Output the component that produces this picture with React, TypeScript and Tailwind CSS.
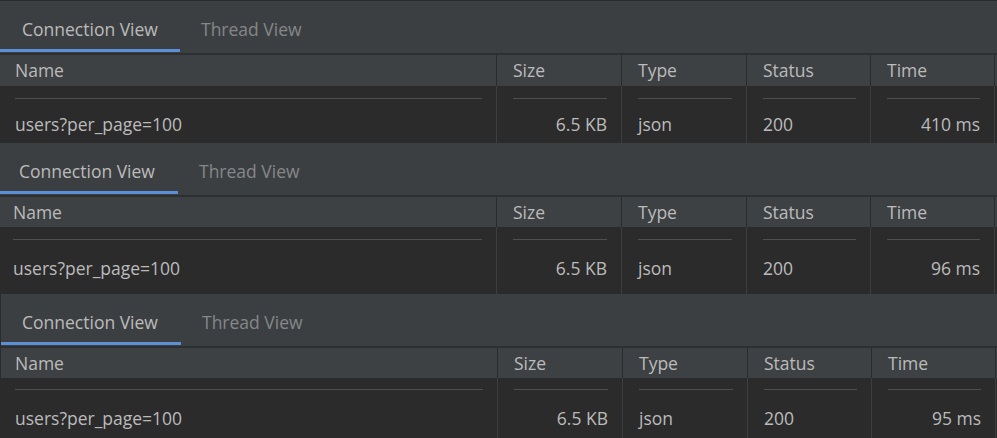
import { ReactNode } from 'react';

type PanelConfig = {
  time: string;
  outer: string;
  tabFirst: string;
  nameHeader: string;
  nameCell: string;
  headerH: string;
  dataH: string;
  lineTop: string;
  textGap: string;
};

const panels: PanelConfig[] = [
  {
    time: '410 ms',
    outer: 'border-t border-[#2b2b2b]',
    tabFirst: 'w-[180px] pl-[22px]',
    nameHeader: 'pl-[15px]',
    nameCell: 'pl-[15px]',
    headerH: 'h-[31px]',
    dataH: 'h-[57px]',
    lineTop: 'pt-[12px]',
    textGap: 'mt-[13px]',
  },
  {
    time: '96 ms',
    outer: '',
    tabFirst: 'w-[178px] pl-[19px]',
    nameHeader: 'pl-[13px]',
    nameCell: 'pl-[13px]',
    headerH: 'h-[30px]',
    dataH: 'h-[67px]',
    lineTop: 'pt-[12px]',
    textGap: 'mt-[16px]',
  },
  {
    time: '95 ms',
    outer: 'border-l border-[#2b2b2b]',
    tabFirst: 'w-[180px] pl-[21px]',
    nameHeader: 'pl-[14px]',
    nameCell: 'pl-[14px]',
    headerH: 'h-[30px]',
    dataH: 'h-[60px]',
    lineTop: 'pt-[11px]',
    textGap: 'mt-[16px]',
  },
];

const HeadCell = ({ className, children }: { className: string; children?: ReactNode }) => (
  <div className={`flex items-center border-l border-[#2b2b2b] pl-[16px] ${className}`}>{children}</div>
);

const DataCell = ({
  className,
  lineTop,
  textGap,
  right,
  children,
}: {
  className: string;
  lineTop: string;
  textGap: string;
  right?: boolean;
  children?: ReactNode;
}) => (
  <div className={`flex flex-col border-l border-[#3c3f41] pr-[14px] ${lineTop} ${className}`}>
    <div className="h-px bg-[#4f5052]" />
    <div className={`leading-[24px] ${textGap} ${right ? 'text-right' : ''}`}>{children}</div>
  </div>
);

const Panel = ({ p }: { p: PanelConfig }) => (
  <section className={`flex flex-col overflow-hidden ${p.outer}`}>
    <div className="flex h-[52px] items-start bg-[#3c3f41]">
      <div className={`h-[51px] border-b-[3px] border-[#5b8fd8] pt-[16px] leading-[24px] text-[#bbbbbb] ${p.tabFirst}`}>
        Connection View
      </div>
      <div className="h-[51px] pl-[21px] pt-[16px] leading-[24px] text-[#858789]">Thread View</div>
    </div>
    <div className="h-[2px] bg-[#2d2f31]" />
    <div className={`flex bg-[#3e4143] text-[#bbbbbb] ${p.headerH}`}>
      <div className={`flex w-[496px] shrink-0 items-center ${p.nameHeader}`}>Name</div>
      <HeadCell className="w-[125px] shrink-0">Size</HeadCell>
      <HeadCell className="w-[125px] shrink-0">Type</HeadCell>
      <HeadCell className="w-[124px] shrink-0">Status</HeadCell>
      <HeadCell className="w-[124px] shrink-0">Time</HeadCell>
      <HeadCell className="flex-1" />
    </div>
    <div className={`flex bg-[#2b2b2b] text-[#bbbbbb] ${p.dataH}`}>
      <div className={`flex w-[496px] shrink-0 flex-col pr-[14px] ${p.lineTop} ${p.nameCell}`}>
        <div className="h-px bg-[#4f5052]" />
        <div className={`leading-[24px] ${p.textGap}`}>users?per_page=100</div>
      </div>
      <DataCell className="w-[125px] shrink-0 pl-[16px]" lineTop={p.lineTop} textGap={p.textGap} right>
        6.5 KB
      </DataCell>
      <DataCell className="w-[125px] shrink-0 pl-[16px]" lineTop={p.lineTop} textGap={p.textGap}>
        json
      </DataCell>
      <DataCell className="w-[124px] shrink-0 pl-[16px]" lineTop={p.lineTop} textGap={p.textGap}>
        200
      </DataCell>
      <DataCell className="w-[124px] shrink-0 pl-[16px]" lineTop={p.lineTop} textGap={p.textGap} right>
        {p.time}
      </DataCell>
      <div className="flex-1 border-l border-[#3c3f41]" />
    </div>
  </section>
);

export default function App() {
  return (
    <div className="flex h-[438px] w-[997px] flex-col overflow-hidden bg-[#2b2b2b] font-['Open_Sans','Noto_Sans',sans-serif] text-[17.5px]">
      {panels.map((p) => (
        <Panel key={p.time} p={p} />
      ))}
    </div>
  );
}
